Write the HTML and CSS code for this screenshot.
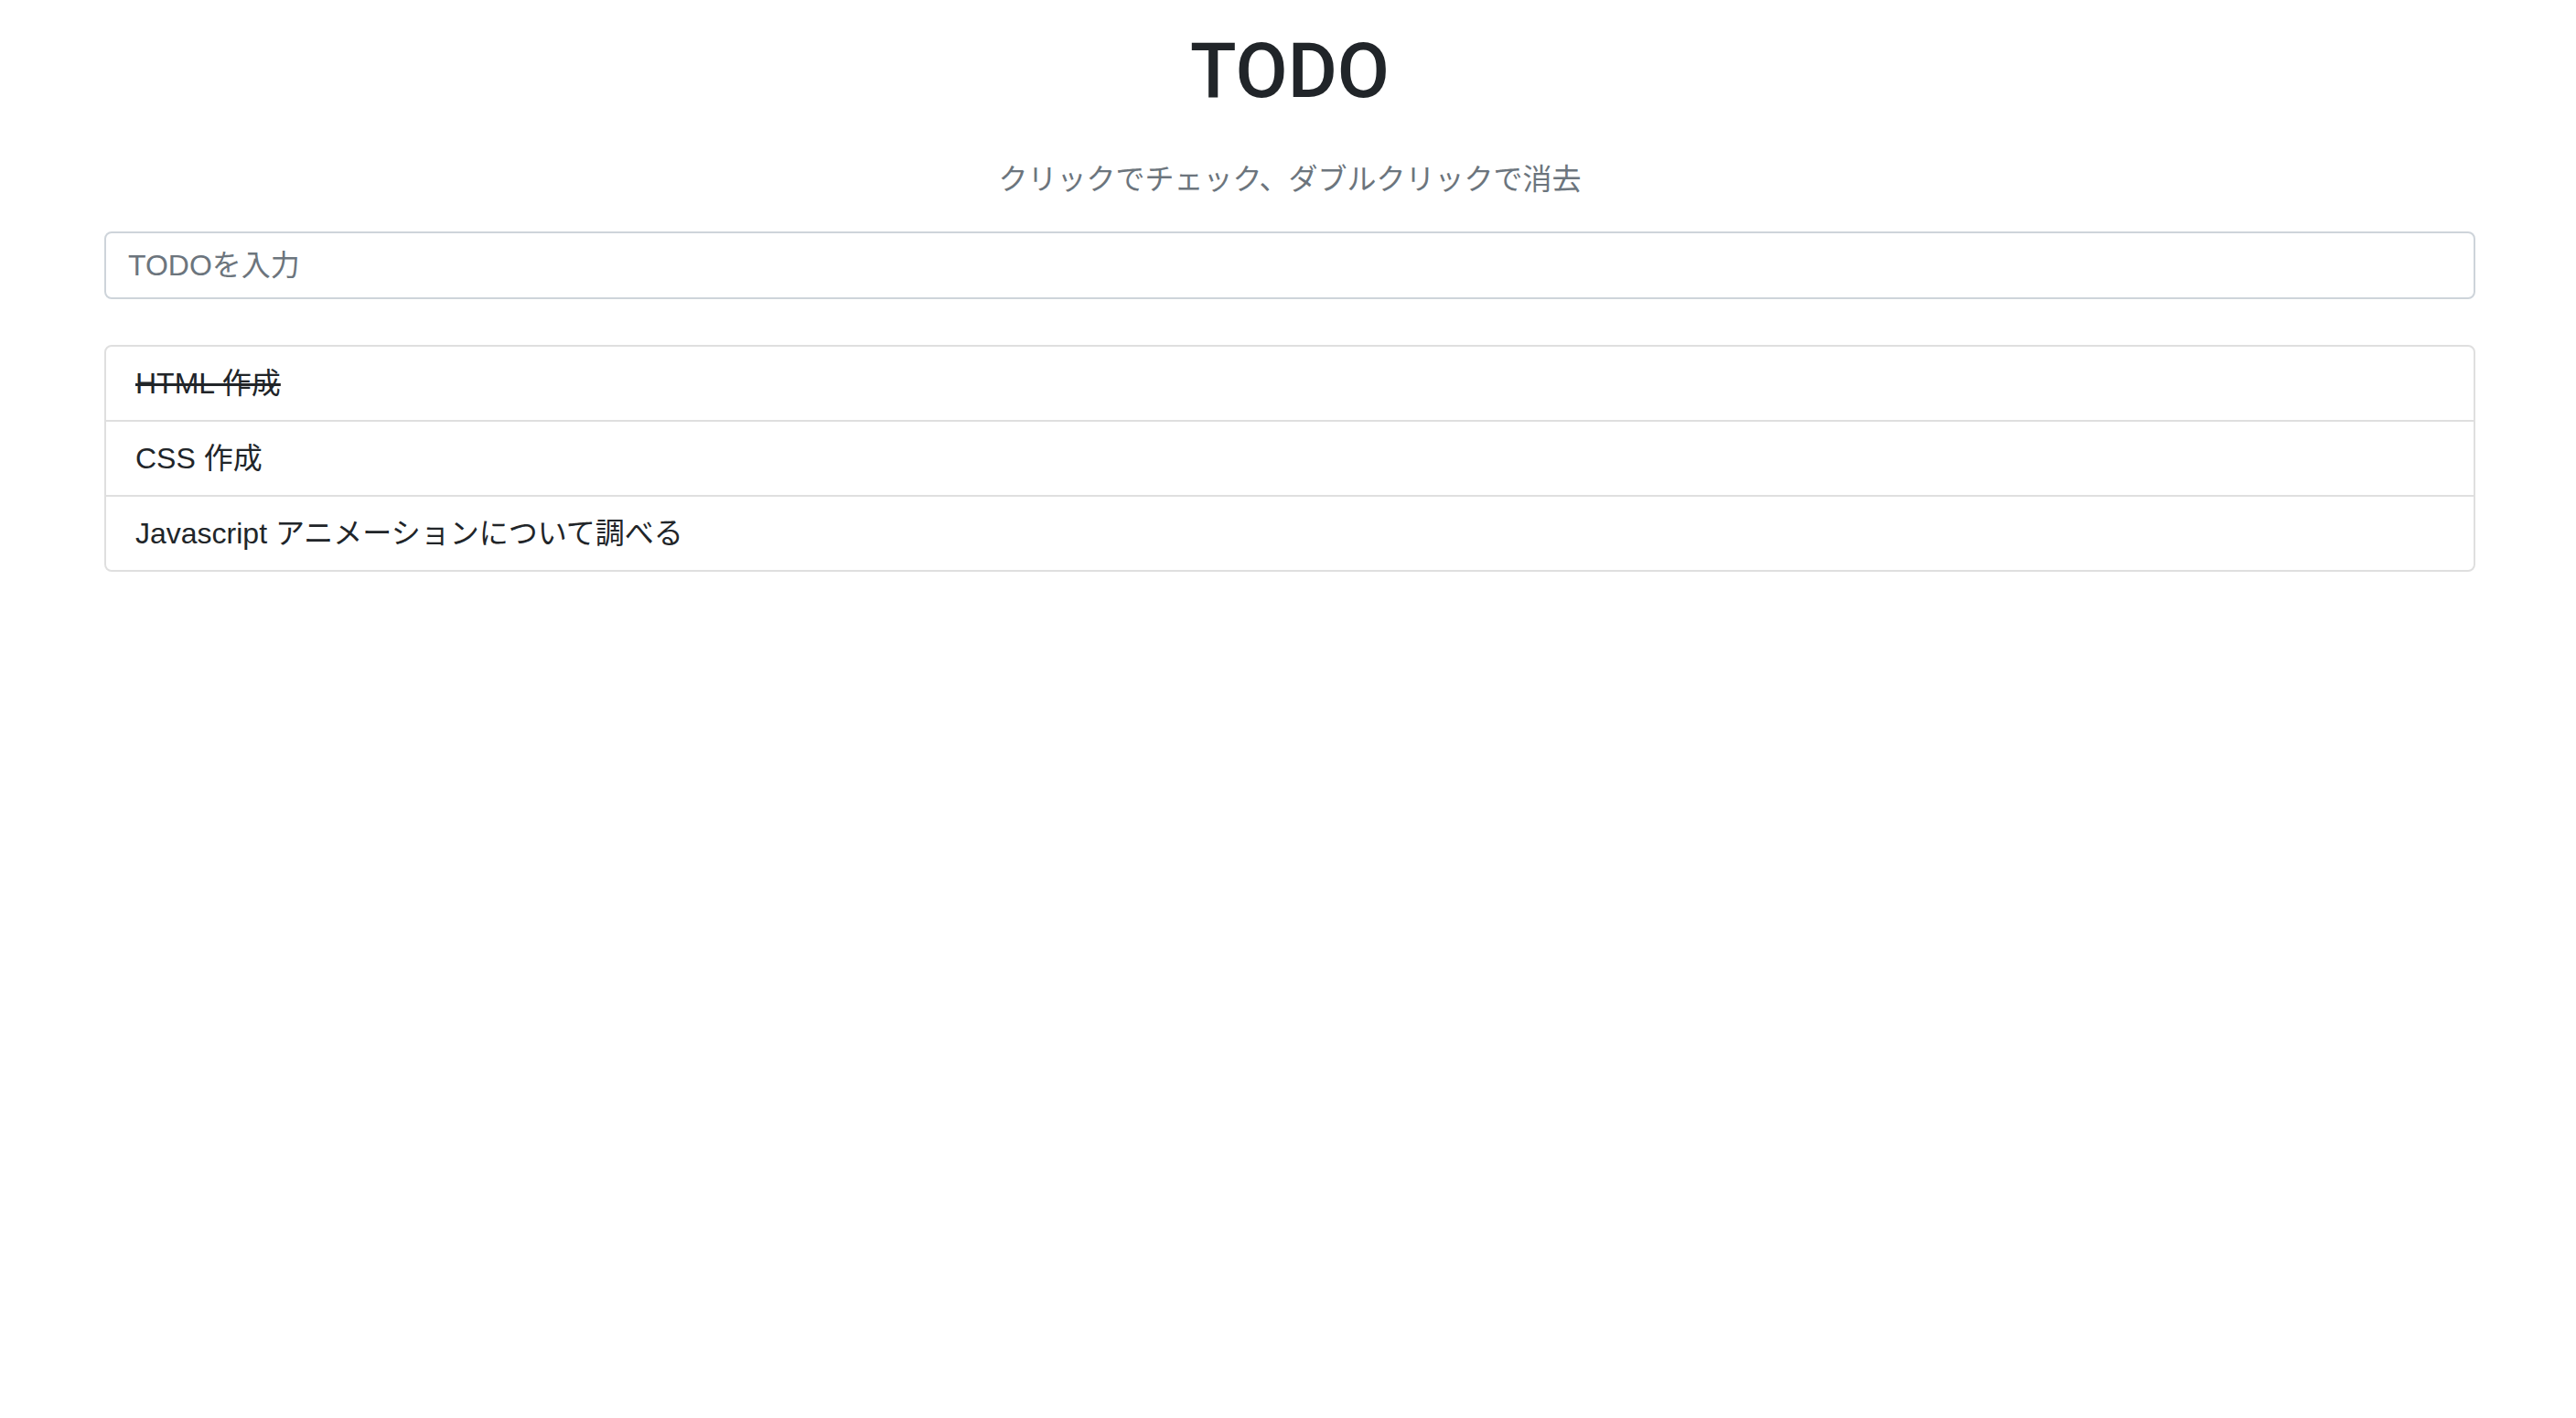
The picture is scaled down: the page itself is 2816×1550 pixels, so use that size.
FILE: index.html
```html
<!DOCTYPE html>
<html lang="ja">
<head>
<meta charset="utf-8">
<title>TODO</title>
<link rel="stylesheet" href="styles.css">
</head>
<body>
<div class="container">
  <h1 class="title">TODO</h1>
  <p class="hint">クリックでチェック、ダブルクリックで消去</p>
  <input class="todo-input" type="text" placeholder="TODOを入力">
  <ul class="todo-list">
    <li class="todo-item done">HTML 作成</li>
    <li class="todo-item">CSS 作成</li>
    <li class="todo-item">Javascript アニメーションについて調べる</li>
  </ul>
</div>
</body>
</html>
```
FILE: styles.css
```css
html, body {
  margin: 0;
  padding: 0;
  background: #fff;
}
body {
  font-family: "Liberation Sans", "Noto Sans CJK JP", sans-serif;
  font-size: 32px;
  line-height: 48px;
  color: #212529;
}
.container {
  padding: 30px 110px 0 114px;
}
.title {
  margin: 0;
  font-family: Roboto, "Liberation Sans", sans-serif;
  font-size: 83px;
  line-height: 96px;
  font-weight: 500;
  text-align: center;
  color: #212529;
  letter-spacing: 0;
}
.hint {
  margin: 46px 0 33px;
  text-align: center;
  color: #6c757d;
}
.todo-input {
  display: block;
  box-sizing: border-box;
  width: 100%;
  height: 74px;
  margin: 0 0 50px;
  padding: 11px 24px;
  border: 2px solid #ced4da;
  border-radius: 8px;
  font-family: inherit;
  font-size: 32px;
  line-height: 48px;
  color: #495057;
  background: #fff;
  outline: none;
}
.todo-input::placeholder {
  color: #6c757d;
  opacity: 1;
}
.todo-list {
  margin: 0;
  padding: 0;
  list-style: none;
  border: 2px solid #dfdfdf;
  border-radius: 8px;
}
.todo-item {
  padding: 16px 32px;
  line-height: 48px;
  border-top: 2px solid #dfdfdf;
}
.todo-item:first-child {
  border-top: 0;
}
.todo-item.done {
  text-decoration: line-through;
}
```
